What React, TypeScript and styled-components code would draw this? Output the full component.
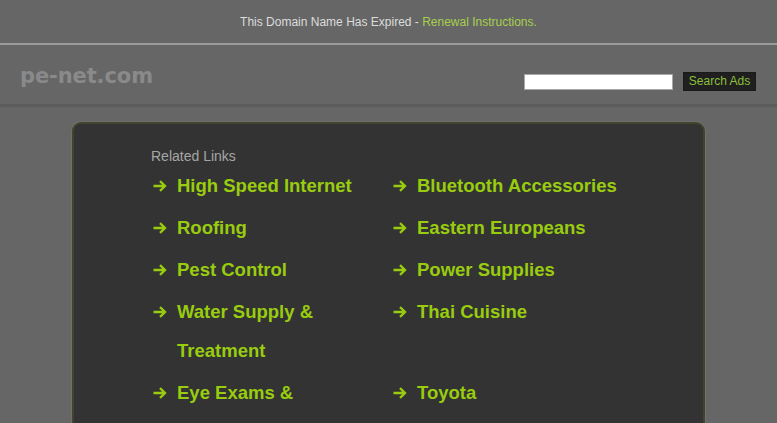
import React from "react";
import styled, { createGlobalStyle } from "styled-components";

const GlobalStyle = createGlobalStyle`
  html, body {
    margin: 0;
    padding: 0;
    background: #666666;
    overflow: hidden;
    font-family: "Liberation Sans", Arial, sans-serif;
  }
`;

const TopBar = styled.div`
  height: 43px;
  display: flex;
  align-items: center;
  justify-content: center;
  font-size: 12px;
  color: #dcdcdc;
  border-bottom: 2px solid #9a9a9a;

  a {
    color: #a8d04c;
    text-decoration: none;
  }
`;

const Header = styled.div`
  height: 59px;
  display: flex;
  justify-content: space-between;
  align-items: flex-start;
  padding: 0 21px 0 20px;
  border-bottom: 3px solid #5b5b5b;
`;

const Logo = styled.div`
  padding-top: 19px;
  font-family: "DejaVu Sans", Verdana, sans-serif;
  font-weight: bold;
  font-size: 21px;
  line-height: 24px;
  color: #8a8a8a;
  letter-spacing: -0.1px;
`;

const SearchForm = styled.form`
  display: flex;
  align-items: center;
  gap: 10px;
  padding-top: 27px;
  margin: 0;
`;

const SearchInput = styled.input`
  box-sizing: border-box;
  width: 149px;
  height: 16px;
  margin: 0;
  padding: 0 3px;
  border: 1px solid #a8a8a8;
  background: #ffffff;
  outline: none;
`;

const SearchButton = styled.button`
  box-sizing: border-box;
  width: 73px;
  height: 19px;
  margin: 0;
  padding: 0;
  border: 1px solid #1a1a1a;
  background: #1f1f1f;
  color: #8cbf3a;
  font-family: "Liberation Sans", Arial, sans-serif;
  font-size: 12px;
  line-height: 17px;
`;

const Panel = styled.div`
  box-sizing: border-box;
  width: 633px;
  min-height: 420px;
  margin: 15px auto 0;
  background: #333333;
  border: 2px solid #42452c;
  border-radius: 9px;
  box-shadow: 0 0 0 1px #707070;
  padding: 23px 0 0 77px;
`;

const Heading = styled.div`
  font-size: 14px;
  line-height: 18px;
  color: #a6a6a6;
  margin-bottom: 1px;
`;

const LinkGrid = styled.div`
  display: grid;
  grid-template-columns: 240px 240px;
  row-gap: 3px;
`;

const LinkItem = styled.a`
  display: flex;
  align-items: flex-start;
  font-weight: bold;
  font-size: 18.5px;
  line-height: 39px;
  color: #99cc0f;
  text-decoration: none;
`;

const Arrow = styled.svg`
  flex: 0 0 auto;
  width: 14px;
  height: 12px;
  margin: 14px 10px 0 2px;
`;

const LinkText = styled.span`
  width: 200px;
`;

const ArrowIcon = () => (
  <Arrow viewBox="0 0 14 12">
    <path
      d="M0.5 6 H12 M7 1.2 L12 6 L7 10.8"
      fill="none"
      stroke="#99cc0f"
      strokeWidth="2.3"
    />
  </Arrow>
);

const links = [
  "High Speed Internet",
  "Bluetooth Accessories",
  "Roofing",
  "Eastern Europeans",
  "Pest Control",
  "Power Supplies",
  "Water Supply & Treatment",
  "Thai Cuisine",
  "Eye Exams & Optometrists",
  "Toyota",
];

export default function App() {
  return (
    <>
      <GlobalStyle />
      <TopBar>
        This Domain Name Has Expired -&nbsp;<a href="#">Renewal Instructions.</a>
      </TopBar>
      <Header>
        <Logo>pe-net.com</Logo>
        <SearchForm onSubmit={(e) => e.preventDefault()}>
          <SearchInput type="text" />
          <SearchButton type="submit">Search Ads</SearchButton>
        </SearchForm>
      </Header>
      <Panel>
        <Heading>Related Links</Heading>
        <LinkGrid>
          {links.map((l) => (
            <LinkItem href="#" key={l}>
              <ArrowIcon />
              <LinkText>{l}</LinkText>
            </LinkItem>
          ))}
        </LinkGrid>
      </Panel>
    </>
  );
}
